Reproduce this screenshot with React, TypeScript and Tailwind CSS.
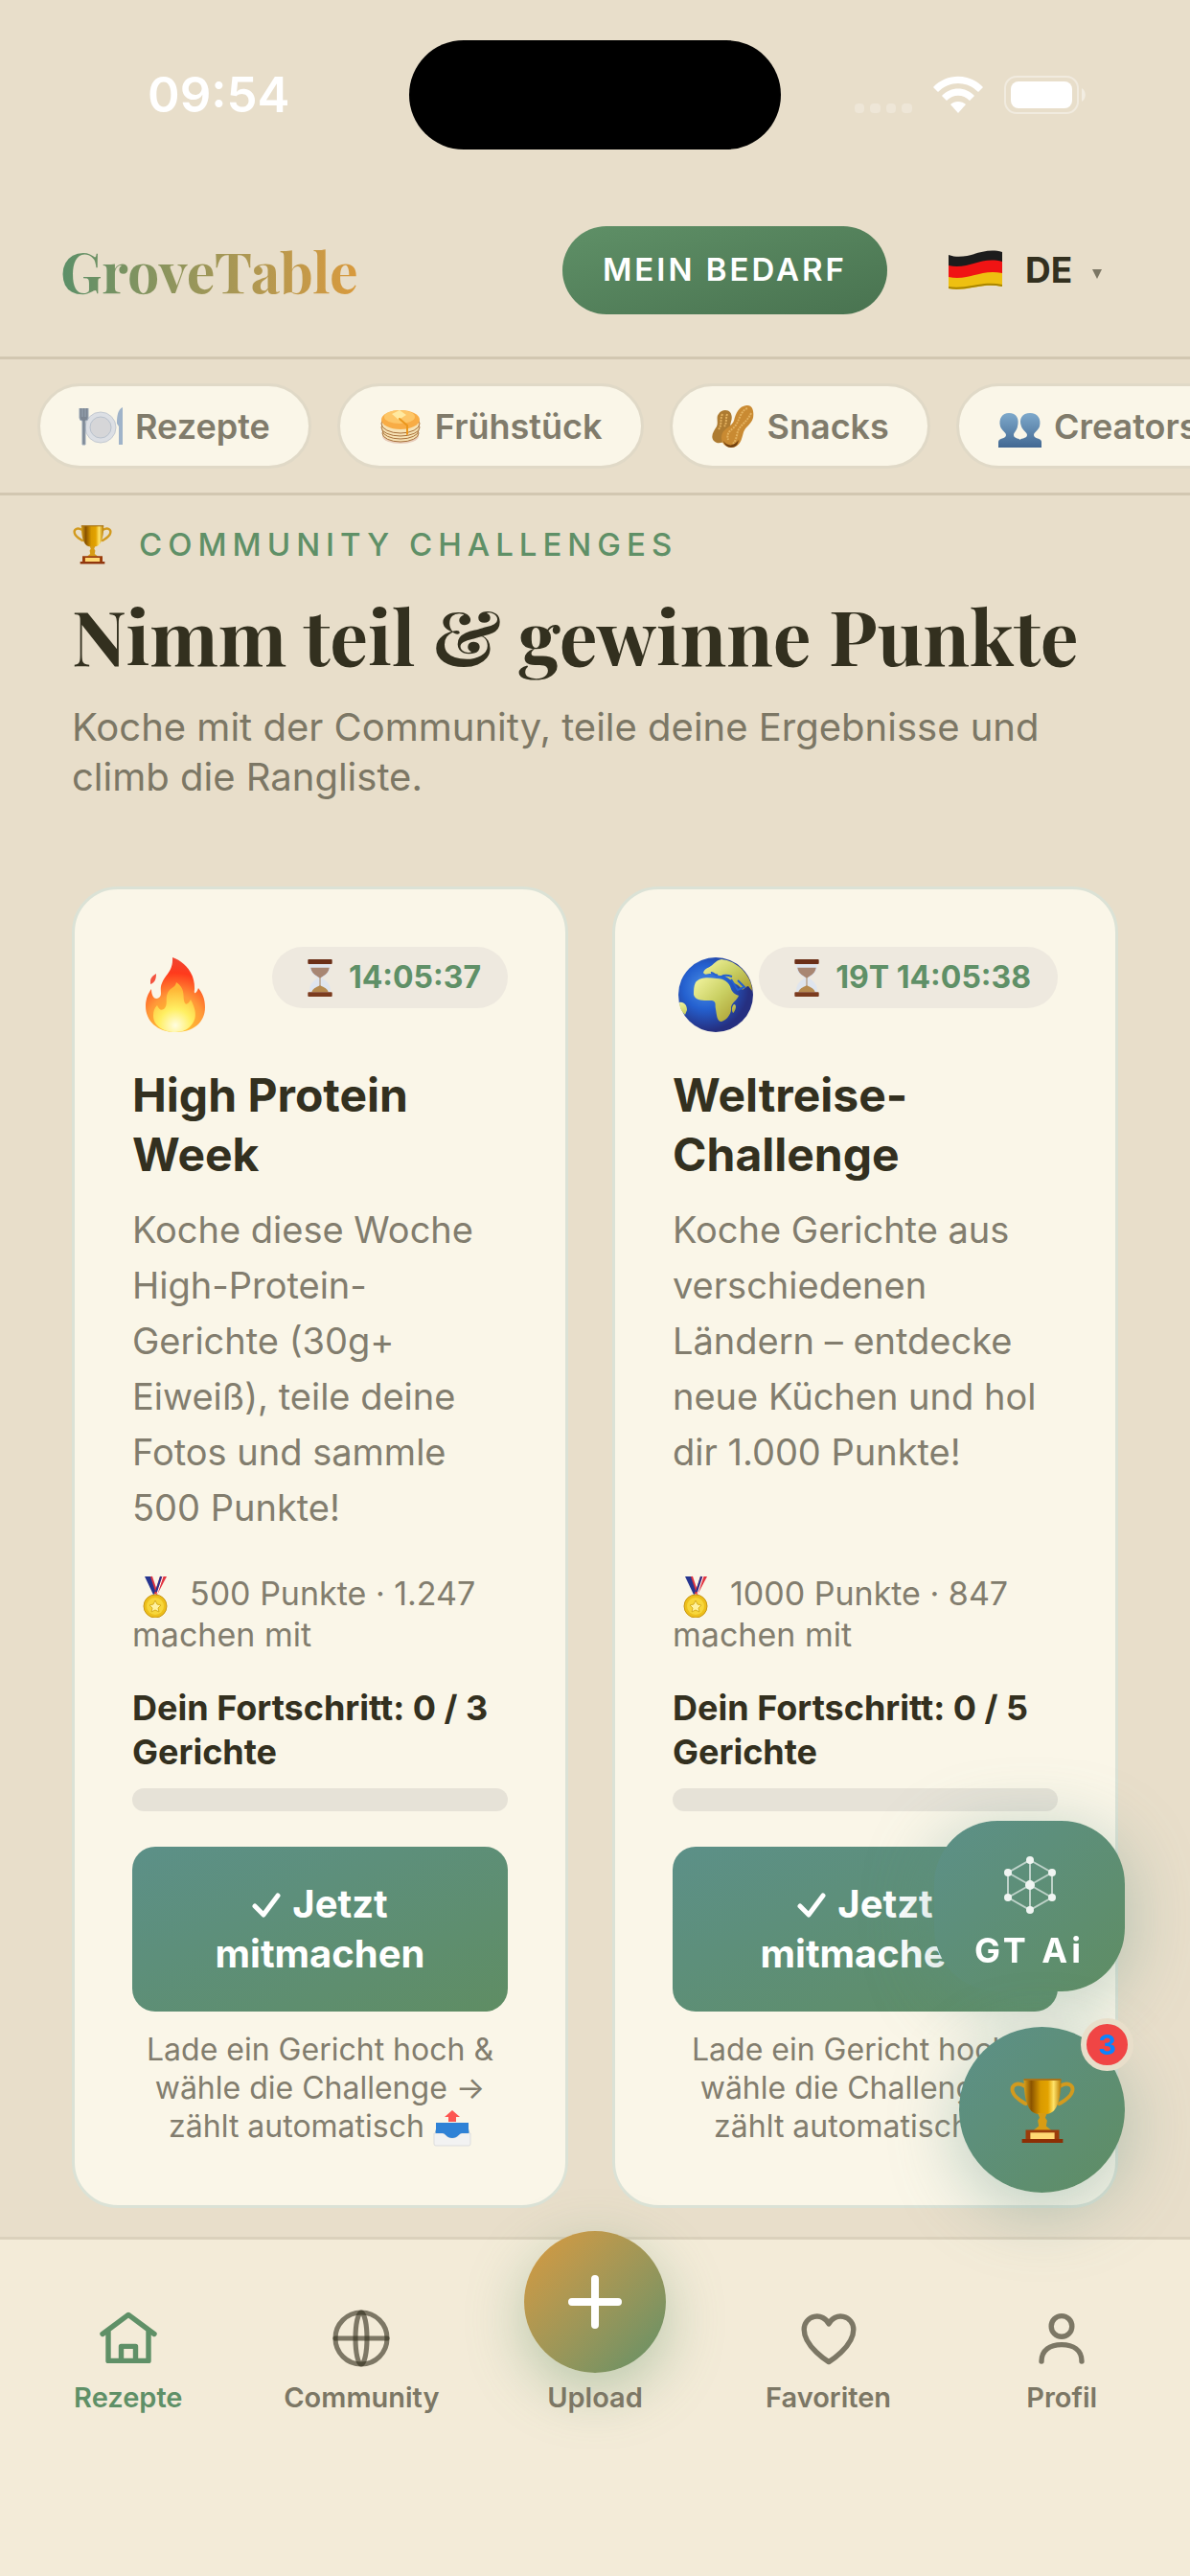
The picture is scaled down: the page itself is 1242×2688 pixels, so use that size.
import React from 'react';

interface IconProps {
  className?: string;
}

interface Challenge {
  id: string;
  icon: React.ReactNode;
  countdown: string;
  title: string;
  description: string;
  points: string;
  participants: string;
  done: number;
  goal: number;
}

const TrophyIcon = ({ className }: IconProps) => (
  <svg viewBox="0 0 70 72" className={className} aria-hidden="true">
    <defs>
      <linearGradient id="cup" x1="0" x2="1">
        <stop offset="0" stopColor="#d9a21c" />
        <stop offset="0.2" stopColor="#8a5300" />
        <stop offset="0.45" stopColor="#d99a00" />
        <stop offset="0.65" stopColor="#e3a300" />
        <stop offset="0.8" stopColor="#ffe36a" />
        <stop offset="1" stopColor="#b87800" />
      </linearGradient>
    </defs>
    <g fill="none" stroke="#d29a1e" strokeWidth="4" strokeLinecap="round">
      <path d="M16 10C8 5 1 9 3 16c2 7 9 10 14 13" />
      <path d="M54 10c8-5 15-1 13 6-2 7-9 10-14 13" />
    </g>
    <path d="M15 3h40c0 17-3 37-16 37h-8C18 40 15 20 15 3Z" fill="url(#cup)" />
    <path d="M15 3h40" stroke="#a8741a" strokeWidth="2" />
    <path d="M30 39h10l-2 5 2 3-1 6 6 5H25l6-5-1-6 2-3Z" fill="#d79c14" />
    <path d="M17 57h36v10H17z" fill="#9b3d0b" />
    <path d="M22 60h26v7H22z" fill="#ffd873" />
    <path d="M13 67h44v4H13z" fill="#8c2f05" />
  </svg>
);

const PlateIcon = ({ className }: IconProps) => (
  <svg viewBox="0 0 46 40" className={className} aria-hidden="true">
    <circle cx="23" cy="21" r="16" fill="#dcdfe4" stroke="#c3c9d1" />
    <circle cx="23" cy="21" r="11" fill="#d6d6d8" stroke="#b9c2cd" />
    <path d="M1 1v10q0 3 3 3v25h3V14q3 0 3-3V1M4 1v9M7 1v9" fill="#7d8793" stroke="#9aa7b6" />
    <path d="M46 0c-5 2-6 9-6 17l2 3v19h4Z" fill="#9fb3c9" />
  </svg>
);

const PancakeIcon = ({ className }: IconProps) => (
  <svg viewBox="0 0 42 38" className={className} aria-hidden="true">
    <ellipse cx="21" cy="29" rx="19" ry="8" fill="#e8cdbb" />
    <g fill="#f7e3b5" stroke="#a8713a" strokeWidth="1">
      <ellipse cx="21" cy="26" rx="19" ry="9" />
      <ellipse cx="21" cy="23" rx="19" ry="9" />
      <ellipse cx="21" cy="20" rx="20" ry="9" />
      <ellipse cx="21" cy="16" rx="20" ry="10" />
    </g>
    <ellipse cx="21" cy="12" rx="20" ry="10" fill="#f8ac45" />
    <ellipse cx="20" cy="9" rx="16" ry="7" fill="#fdc667" />
    <path d="m12 6 8-4 7 5-8 5Z" fill="#ffe9a0" />
    <path d="m20 11 8 7v9" stroke="#eb971d" strokeWidth="2" fill="none" strokeLinecap="round" />
  </svg>
);

const PeanutIcon = ({ className }: IconProps) => (
  <svg viewBox="0 0 44 46" className={className} aria-hidden="true">
    <path d="M14 6c6 0 8 6 6 12-2 5 1 9-2 15s-11 10-16 5c-4-5 0-10 3-15 2-4-1-10 2-13 2-3 4-4 7-4Z" fill="#ad7b31" />
    <path d="M36 1c7-1 8 7 7 13-2 7-8 9-10 15-2 7-3 15-12 16-9 0-13-8-10-15 3-6 9-6 12-13C25 9 28 2 36 1Z" fill="#c98a32" />
    <path d="M37 4c-8 3-8 14-14 20-5 4-8 7-6 13M41 9c-4 9-11 12-14 19-1 5-2 10-5 13M11 10c-3 7 0 11-4 16M16 10c-2 5 0 9-3 13" stroke="#e3b15f" strokeWidth="2" strokeDasharray="2 1" fill="none" />
    <path d="M12 38c4 6 11 6 16-1-1 5-3 8-8 8-4 0-7-3-8-7Z" fill="#73410f" />
  </svg>
);

const PeopleIcon = ({ className }: IconProps) => (
  <svg viewBox="0 0 46 36" className={className} aria-hidden="true">
    <defs>
      <linearGradient id="people" x1="0" y1="0" x2="0" y2="36" gradientUnits="userSpaceOnUse">
        <stop offset="0" stopColor="#7ea9cb" />
        <stop offset="1" stopColor="#426892" />
      </linearGradient>
    </defs>
    <g fill="url(#people)">
      <path d="M12 0c8 0 11 6 9 14-1 5-4 6-4 9 0 4 7 3 7 6v7H1v-6c0-4 8-3 8-7 0-3-4-4-6-9C1 6 5 0 12 0Z" />
      <path d="M34 0c8 0 12 6 10 14-2 5-6 6-6 9 0 4 8 3 8 7v6H23v-7c0-3 8-2 8-6 0-3-4-4-6-9C22 6 26 0 34 0Z" />
    </g>
  </svg>
);

const FlagIcon = ({ className }: IconProps) => (
  <svg viewBox="0 0 56 42" className={className} aria-hidden="true">
    <path d="M0 5c20 7 34-9 56-3v13c-22-6-36 8-56 3Z" fill="#1c1c1c" />
    <path d="M0 16c20 5 34-10 56-4v15c-22-5-36 7-56 3Z" fill="#f01414" />
    <path d="M0 28c20 5 34-9 56-4v14c-22-5-36 6-56 2Z" fill="#eec011" />
    <path d="M0 39c20 4 34-7 56-2" fill="none" stroke="#a98500" strokeWidth="2" />
  </svg>
);

const HourglassIcon = ({ className }: IconProps) => (
  <svg viewBox="0 0 28 40" className={className} aria-hidden="true">
    <path d="M3 5h22c1 8-4 12-9 15 5 3 10 7 9 15H3c-1-8 4-12 9-15C7 17 2 13 3 5Z" fill="#dfe5ee" />
    <path d="M4 9h20c-1 6-5 8-10 11C9 17 5 15 4 9Z" fill="#a88672" />
    <path d="M14 28c5 2 8 4 9 7H5c1-3 4-5 9-7Z" fill="#b68a4f" />
    <path d="M14 19v10" stroke="#a9835c" strokeWidth="1" />
    <rect x="1" y="0" width="26" height="5" rx="1" fill="#6b2f18" />
    <rect x="1" y="35" width="26" height="5" rx="1" fill="#7b3b1e" />
  </svg>
);

const FireIcon = ({ className }: IconProps) => (
  <svg viewBox="0 0 90 100" className={className} aria-hidden="true">
    <defs>
      <radialGradient id="fire" cx="45" cy="80" r="66" gradientUnits="userSpaceOnUse">
        <stop offset="0.1" stopColor="#ffca2e" />
        <stop offset="0.45" stopColor="#ff9838" />
        <stop offset="0.8" stopColor="#ff3a1c" />
        <stop offset="1" stopColor="#f2442f" />
      </radialGradient>
      <radialGradient id="flame" cx="45" cy="82" r="38" gradientUnits="userSpaceOnUse">
        <stop offset="0" stopColor="#fffde0" />
        <stop offset="0.45" stopColor="#ffef62" />
        <stop offset="1" stopColor="#ffb636" />
      </radialGradient>
    </defs>
    <path d="M42 11c12 4 24 16 23 34-1 5 2 4 4-2 4 5 7 11 7 20 0 16-12 26-31 26S14 77 14 62c0-8 3-14 6-18 0 7 3 12 8 9 4-3 0-9 3-15 3-9 12-12 11-27Z" fill="url(#fire)" />
    <path d="M19 36c0-4 3-6 6-8 0 5-1 9-6 11Z" fill="#f4523f" />
    <path d="M46 37c9 6 7 13 8 19 1 5 4 5 7-1 5 9 7 18 2 25-4 6-10 9-18 9-13 0-23-7-23-17 0-5 1-8 4-11 2 5 5 6 8 3 4-5-1-12 5-19 3-3 6-3 7-8Z" fill="url(#flame)" />
  </svg>
);

const EarthIcon = ({ className }: IconProps) => (
  <svg viewBox="0 0 90 100" className={className} aria-hidden="true">
    <defs>
      <radialGradient id="ocean" cx="34" cy="42" r="46" gradientUnits="userSpaceOnUse">
        <stop offset="0" stopColor="#4b8fe6" />
        <stop offset="0.5" stopColor="#2460cf" />
        <stop offset="1" stopColor="#252f80" />
      </radialGradient>
      <linearGradient id="land" x1="0" x2="1" y1="0" y2="1">
        <stop offset="0" stopColor="#f3f5a0" />
        <stop offset="0.5" stopColor="#c9cf62" />
        <stop offset="1" stopColor="#a99a2e" />
      </linearGradient>
    </defs>
    <circle cx="45" cy="50" r="39" fill="url(#ocean)" />
    <g fill="url(#land)">
      <path d="M24 37c5-6 14-5 22-4 8 0 13 4 15 11 2 5 6 6 8 7-2 5-7 7-8 12 1 7-5 14-10 15-5 0-5-8-6-13-1-5 1-8-4-9-8 0-17 1-19-6 0-5 0-9 2-13Z" />
      <path d="M32 27c1-4 5-5 8-7 4-3 6-6 11-7 10 1 20 7 26 16 4 6 6 11 6 17l-4-5c-4 1-5 6-8 2-2-4-7-4-10-8-5-4-7-5-12-5-4 0-6-3-9-2-4 0-6 2-8-1Z" />
      <path d="M7 58c5-1 8 3 8 8l-2 5c-4-4-6-8-6-13ZM64 60c4 0 1 8-1 9-2-3-1-7 1-9Z" />
    </g>
    <path d="M40 27c3-1 4 4 7 2M51 31c3-2 8-1 11 0M61 34l7 11 7-3-7-7" stroke="#2460cf" strokeWidth="2" fill="none" />
  </svg>
);

const MedalIcon = ({ className }: IconProps) => (
  <svg viewBox="0 0 28 44" className={className} aria-hidden="true">
    <path d="M3 1h7l6 17-4 2Z" fill="#26358f" />
    <path d="M26 1h-7l-6 18 3 1Z" fill="#e2343f" />
    <path d="m10 1 5 15" stroke="#e2343f" strokeWidth="2" />
    <path d="M20 1 15 17" stroke="#26358f" strokeWidth="2" />
    <path d="M22 1 16 19" stroke="#fff" strokeWidth="1" />
    <circle cx="14" cy="32" r="12" fill="#edbf1b" stroke="#c89512" />
    <circle cx="14" cy="32" r="9" fill="#f7d63b" />
    <path d="m14 26 2 4 4 1-3 3 1 4-4-2-4 2 1-4-3-3 4-1Z" fill="#fff2a1" stroke="#d8ae1c" />
  </svg>
);

const OutboxIcon = ({ className }: IconProps) => (
  <svg viewBox="0 0 40 38" className={className} aria-hidden="true">
    <path d="M4 13h32l2 13H2Z" fill="#1268b5" />
    <path d="M7 14h26v11H7z" fill="#3c8fe0" />
    <path d="M1 24h9c3 0 4 5 10 5s7-5 10-5h9v11q0 2-2 2H3q-2 0-2-2Z" fill="#f2f2f2" stroke="#dddddd" />
    <path d="M3 13h34v11h-7c-3 0-4 5-10 5s-7-5-10-5H3Z" fill="#2f82d6" />
    <path d="m20 0 8 7h-4v5h-8V7h-4Z" fill="#fd5651" />
  </svg>
);

const CheckIcon = ({ className }: IconProps) => (
  <svg viewBox="0 0 30 28" className={className} fill="none" stroke="currentColor" strokeWidth="5" strokeLinecap="round" strokeLinejoin="round" aria-hidden="true">
    <path d="m3 15 9 9L27 4" />
  </svg>
);

const NetworkIcon = ({ className }: IconProps) => (
  <svg viewBox="0 0 54 60" className={className} aria-hidden="true">
    <g stroke="#ffffff" strokeOpacity="0.6" strokeWidth="2" fill="none">
      <path d="m27 4 23 13v26L27 56 4 43V17Z" />
      <path d="M27 4v52M4 17l46 26M50 17 4 43" />
    </g>
    <g fill="#f0f5f2">
      <circle cx="27" cy="4" r="4" />
      <circle cx="50" cy="17" r="4" />
      <circle cx="50" cy="43" r="4" />
      <circle cx="27" cy="56" r="4" />
      <circle cx="4" cy="43" r="4" />
      <circle cx="4" cy="17" r="4" />
      <circle cx="27" cy="30" r="5" />
    </g>
  </svg>
);

const NavIcon = ({ children }: { children: React.ReactNode }) => (
  <svg viewBox="0 0 24 24" className="size-[72px]" fill="none" stroke="currentColor" strokeWidth="1.8" strokeLinecap="round" strokeLinejoin="round" aria-hidden="true">
    {children}
  </svg>
);

const categories = [
  { label: 'Rezepte', icon: <PlateIcon className="h-10 w-[46px]" /> },
  { label: 'Frühstück', icon: <PancakeIcon className="h-[38px] w-[46px]" /> },
  { label: 'Snacks', icon: <PeanutIcon className="h-[46px] w-[46px]" /> },
  { label: 'Creators', icon: <PeopleIcon className="mt-2 h-9 w-[46px]" /> },
];

const challenges: Challenge[] = [
  {
    id: 'protein',
    icon: <FireIcon className="h-[100px] w-[90px] shrink-0" />,
    countdown: '14:05:37',
    title: 'High Protein Week',
    description: 'Koche diese Woche High-Protein-Gerichte (30g+ Eiweiß), teile deine Fotos und sammle 500 Punkte!',
    points: '500',
    participants: '1.247',
    done: 0,
    goal: 3,
  },
  {
    id: 'world',
    icon: <EarthIcon className="h-[100px] w-[90px] shrink-0" />,
    countdown: '19T 14:05:38',
    title: 'Weltreise-Challenge',
    description: 'Koche Gerichte aus verschiedenen Ländern – entdecke neue Küchen und hol dir 1.000 Punkte!',
    points: '1000',
    participants: '847',
    done: 0,
    goal: 5,
  },
];

const StatusBar = () => (
  <div className="grid grid-cols-[1fr_388px_1fr] items-center py-[42px] text-white">
    <time className="pl-[154px] text-[51px] leading-[60px] font-semibold">09:54</time>
    <div className="h-[114px] rounded-full bg-black" />
    <div className="flex items-center justify-end gap-[22px] pr-[108px]">
      <svg viewBox="0 0 60 40" className="h-10 w-[60px]" fill="#ffffff" fillOpacity="0.25" aria-hidden="true">
        <rect x="0" y="29" width="10" height="10" rx="4" />
        <rect x="16" y="29" width="11" height="10" rx="4" />
        <rect x="33" y="29" width="10" height="10" rx="4" />
        <rect x="49" y="29" width="11" height="10" rx="4" />
      </svg>
      <svg viewBox="0 0 52 40" className="h-10 w-[52px]" fill="#ffffff" aria-hidden="true">
        <path d="M0 12C14-3 38-3 52 12l-5 5C35 5 17 5 5 17Z" />
        <path d="M9 21c9-10 25-10 34 0l-5 5c-7-7-17-7-24 0Z" />
        <path d="M18 30c4-4 12-4 16 0l-8 9Z" />
      </svg>
      <svg viewBox="0 0 86 40" className="h-10 w-[86px]" aria-hidden="true">
        <rect x="1" y="1" width="76" height="38" rx="12" fill="none" stroke="#ffffff" strokeOpacity="0.4" strokeWidth="2" />
        <rect x="7" y="6" width="64" height="28" rx="8" fill="#ffffff" />
        <path d="M81 13c5 3 5 11 0 14Z" fill="#ffffff" fillOpacity="0.45" />
      </svg>
    </div>
  </div>
);

const Header = () => (
  <header className="flex items-center justify-between border-b-[3px] border-[#d2c7b1] pt-[38px] pr-[92px] pb-11 pl-[63px]">
    <a
      href="#start"
      className="bg-linear-to-r from-[#5a8f68] to-[#d99a3d] bg-clip-text font-['Playfair_Display','Liberation_Serif',serif] text-[59px] leading-[80px] font-bold text-transparent"
    >
      GroveTable
    </a>
    <div className="flex items-center gap-16">
      <button className="h-[92px] rounded-full bg-linear-to-br from-[#5f9067] to-[#497350] px-[42px] text-[33px] font-semibold tracking-[3px] text-white">
        MEIN BEDARF
      </button>
      <div className="flex items-center">
        <FlagIcon className="mr-6 h-[42px] w-14" />
        <select
          aria-label="Sprache"
          defaultValue="DE"
          className="w-[66px] appearance-none bg-transparent text-[37px] font-bold text-[#33301f]"
        >
          <option>DE</option>
          <option>EN</option>
        </select>
        <svg viewBox="0 0 10 10" className="mt-2 ml-1 size-[10px]" fill="#7c7765" aria-hidden="true">
          <path d="M0 0h10L5 10Z" />
        </svg>
      </div>
    </div>
  </header>
);

const CategoryBar = () => (
  <nav aria-label="Kategorien" className="flex gap-[27px] overflow-x-auto border-b-[3px] border-[#d2c7b1] py-[25px] pl-[39px] [scrollbar-width:none]">
    {categories.map((c) => (
      <a
        key={c.label}
        href={`#${c.label}`}
        className="flex h-[89px] shrink-0 items-center gap-[13px] rounded-full border-[3px] border-[#e0d9c7] bg-[#faf6e8] px-10 text-[36px] font-semibold text-[#807b6b]"
      >
        {c.icon}
        {c.label}
      </a>
    ))}
  </nav>
);

const ChallengeCard = ({ challenge }: { challenge: Challenge }) => {
  const percent = (challenge.done / challenge.goal) * 100;

  return (
    <article className="flex flex-col rounded-[48px] border-[3px] border-[#dbe2d6] bg-[#faf6e8] px-[60px] pt-[60px] pb-[62px]">
      <div className="flex items-start justify-between">
        {challenge.icon}
        <div className="flex h-16 items-center gap-4 rounded-full bg-[#eee9df] pr-7 pl-9 text-[32px] font-bold whitespace-nowrap text-[#5f9067]">
          <HourglassIcon className="h-[39px] w-[28px]" />
          {challenge.countdown}
        </div>
      </div>
      <h2 className="mt-6 text-[48px] leading-[62px] font-bold text-[#33301f]">{challenge.title}</h2>
      <p className="mt-[18px] flex-1 text-[38px] leading-[58px] text-[#827d6e]">{challenge.description}</p>
      <p className="mt-[39px] text-[34px] leading-[43px] text-[#827d6e]">
        <MedalIcon className="mr-[22px] ml-[10px] -my-2 inline-block h-[44px] w-[28px]" />
        {challenge.points} Punkte · {challenge.participants} machen mit
      </p>
      <p className="mt-8 text-[36px] leading-[46px] font-bold text-[#33301f]">
        Dein Fortschritt: {challenge.done} / {challenge.goal} Gerichte
      </p>
      <div className="mt-[15px] h-6 overflow-hidden rounded-full bg-[#e6e2d7]">
        <div className="h-full bg-[#5f9067]" style={{ width: `${percent}%` }} />
      </div>
      <button className="mt-[37px] rounded-[24px] bg-linear-to-br from-[#5c9088] to-[#5f8d63] px-16 py-[34px] text-[40px] leading-[52px] font-bold text-white">
        <CheckIcon className="mr-3 -mt-1 inline-block h-7 w-[30px]" />
        Jetzt mitmachen
      </button>
      <p className="mt-5 text-center text-[32px] leading-[40px] text-[#827d6e]">
        Lade ein Gericht hoch & wähle die Challenge → zählt automatisch{' '}
        <OutboxIcon className="-my-2 inline-block h-[38px] w-10" />
      </p>
    </article>
  );
};

const FloatingActions = () => (
  <div className="fixed right-[68px] bottom-[400px] z-10 flex flex-col items-end gap-[37px]">
    <button className="flex h-[178px] w-[199px] flex-col items-center justify-center gap-4 rounded-[66px] bg-linear-to-br from-[#5c9088] to-[#5f8d63] pt-4 text-[36px] leading-[44px] font-bold tracking-[4px] text-white shadow-[0_12px_72px_rgba(92,144,136,0.4)]">
      <NetworkIcon className="h-[60px] w-[54px]" />
      GT Ai
    </button>
    <button
      aria-label="Challenges"
      className="relative flex size-[173px] items-center justify-center rounded-full bg-linear-to-br from-[#5c9088] to-[#5f8d63] shadow-[0_18px_72px_rgba(92,144,136,0.4)]"
    >
      <TrophyIcon className="h-[70px] w-[68px]" />
      <span className="absolute -top-[9px] -right-[9px] flex size-[55px] items-center justify-center rounded-full border-[6px] border-[#e8deca] bg-[#f04545] text-[29px] font-bold text-[#0a84ff]">
        3
      </span>
    </button>
  </div>
);

const TabBar = () => {
  const tab = 'flex flex-col items-center gap-2 text-[29px] leading-[36px] font-semibold text-[#7c7765]';

  return (
    <nav aria-label="Hauptmenü" className="mt-[30px] grid flex-1 grid-cols-5 items-start border-t-[3px] border-[#dbd1bc] bg-[#f3ebd8] px-3 pt-[67px] pb-[168px]">
      <a href="#rezepte" aria-current="page" className="flex flex-col items-center gap-2 text-[29px] leading-[36px] font-semibold text-[#5f9067]">
        <NavIcon>
          <path d="M3 10.5 12 3.8l9 6.7M5 9.5v10.3h14V9.5M9.5 19.8v-5h5v5" />
        </NavIcon>
        Rezepte
      </a>
      <a href="#community" className={tab}>
        <svg viewBox="0 0 24 24" className="size-[72px]" fill="none" stroke="#33301f" strokeOpacity="0.62" strokeWidth="1.7" aria-hidden="true">
          <circle cx="12" cy="12" r="9" />
          <ellipse cx="12" cy="12" rx="2" ry="9" />
          <path d="M3 12h18" strokeLinecap="round" />
        </svg>
        Community
      </a>
      <a href="#upload" className={tab}>
        <span className="-mt-[76px] flex size-[148px] items-center justify-center rounded-full bg-linear-to-br from-[#d99a3d] to-[#5f9067] text-white shadow-[0_18px_60px_rgba(95,144,103,0.4)]">
          <svg viewBox="0 0 56 56" className="size-14" stroke="currentColor" strokeWidth="8" strokeLinecap="round" aria-hidden="true">
            <path d="M28 4v48M4 28h48" />
          </svg>
        </span>
        Upload
      </a>
      <a href="#favoriten" className={tab}>
        <NavIcon>
          <path d="M12 20.2S3.400 15 3.400 8.900A4.500 4.500 0 0 1 12 7a4.500 4.500 0 0 1 8.600 1.900C20.600 15 12 20.200 12 20.200Z" />
        </NavIcon>
        Favoriten
      </a>
      <a href="#profil" className={tab}>
        <NavIcon>
          <circle cx="12" cy="7.8" r="3.6" />
          <path d="M5 20c0-4 3-5.800 7-5.800s7 1.800 7 5.800" />
        </NavIcon>
        Profil
      </a>
    </nav>
  );
};

export default function App() {
  return (
    <div className="flex min-h-screen flex-col bg-[#e8deca] font-['Inter','Liberation_Sans',sans-serif]">
      <StatusBar />
      <Header />
      <CategoryBar />
      <main className="px-[75px] pt-[30px]">
        <p className="flex items-center gap-[27px] text-[33px] leading-[40px] font-medium tracking-[6px] text-[#5f9067]">
          <TrophyIcon className="h-[42px] w-[43px]" />
          COMMUNITY CHALLENGES
        </p>
        <h1 className="mt-[30px] font-['Playfair_Display','Liberation_Serif',serif] text-[79px] leading-[88px] font-bold text-[#33301f]">
          Nimm teil & gewinne Punkte
        </h1>
        <p className="mt-[26px] text-[40px] leading-[52px] text-[#7c7765]">
          Koche mit der Community, teile deine Ergebnisse und climb die Rangliste.
        </p>
        <section className="mt-[88px] grid grid-cols-[518fr_528fr] gap-[46px]">
          {challenges.map((challenge) => (
            <ChallengeCard key={challenge.id} challenge={challenge} />
          ))}
        </section>
      </main>
      <TabBar />
      <FloatingActions />
    </div>
  );
}
